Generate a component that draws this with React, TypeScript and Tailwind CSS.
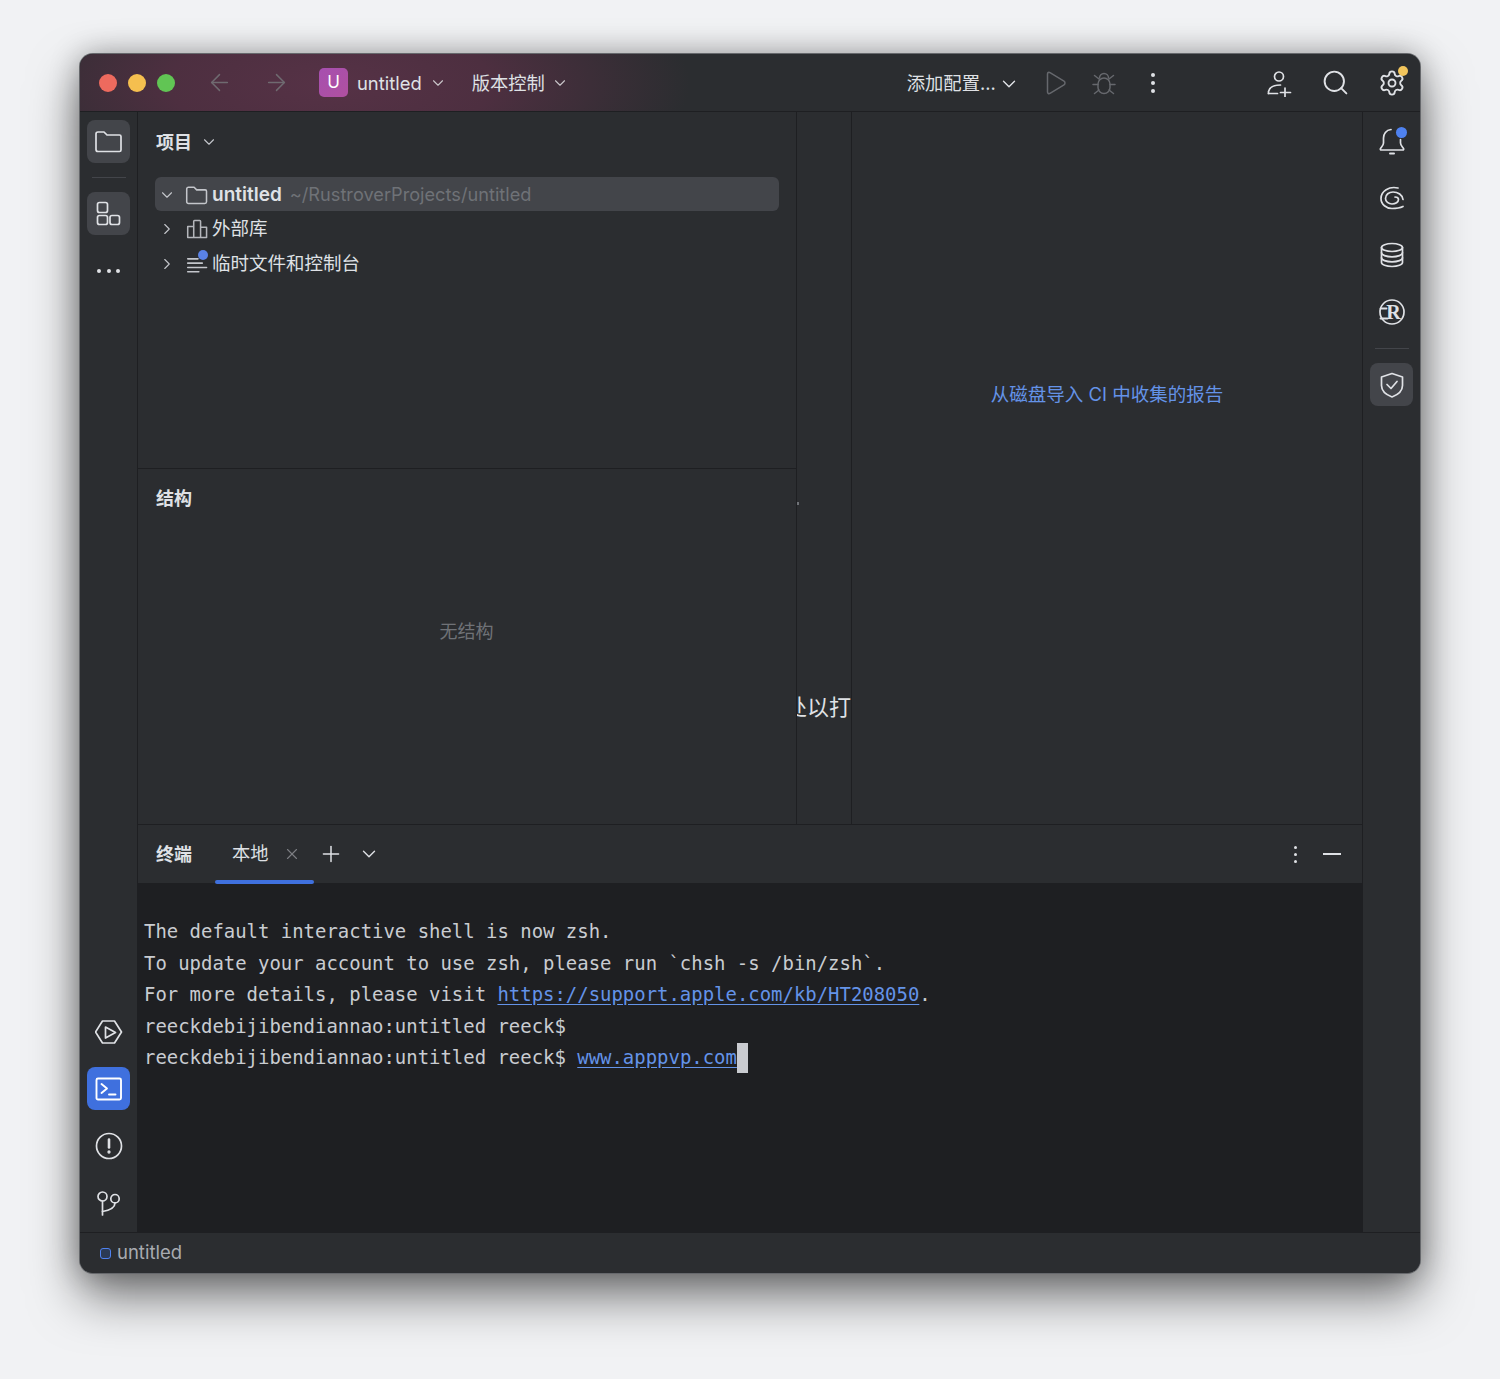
import { ArrowLeft, ArrowRight, ChevronDown, ChevronRight, Plus, Search, Settings, X } from "lucide-react";
import type { ReactNode } from "react";

const UI_FONT = "font-['Inter','Noto_Sans_CJK_SC',sans-serif]";

function Ico({ size = 28, sw = 1.7, className = "", children }: { size?: number; sw?: number; className?: string; children: ReactNode }) {
  return (
    <svg width={size} height={size} viewBox="0 0 28 28" fill="none" stroke="currentColor" strokeWidth={sw} strokeLinecap="round" strokeLinejoin="round" className={className}>
      {children}
    </svg>
  );
}

function RailButton({ active, blue, children }: { active?: boolean; blue?: boolean; children: ReactNode }) {
  return (
    <div className={`flex h-[43px] w-[43px] items-center justify-center rounded-lg ${blue ? "bg-[#3f70de] text-white" : active ? "bg-[#43454a] text-[#dfe1e5]" : "text-[#dfe1e5]"}`}>
      {children}
    </div>
  );
}

function LeftRail() {
  return (
    <div className="flex w-[58px] shrink-0 flex-col items-center border-r border-[#1e1f22] bg-[#2b2d30] pt-[8px] pb-[8px]">
      <RailButton active>
        <Ico>
          <path d="M1 6a2 2 0 0 1 2-2h6l3 3h12.500A1.500 1.500 0 0 1 26 8.500V22a1.500 1.500 0 0 1-1.500 1.500H3a2 2 0 0 1-2-2z" />
        </Ico>
      </RailButton>
      <div className="my-[14px] h-px w-[34px] bg-[#43454a]" />
      <RailButton active>
        <Ico>
          <rect x="2.500" y="2.500" width="10" height="10" rx="2" />
          <rect x="2.500" y="15.500" width="10" height="9" rx="2" />
          <rect x="15" y="15.500" width="9.500" height="9" rx="2" />
        </Ico>
      </RailButton>
      <div className="mt-[34px] flex gap-[5.500px]">
        <span className="h-[4px] w-[4px] rounded-full bg-[#dfe1e5]" />
        <span className="h-[4px] w-[4px] rounded-full bg-[#dfe1e5]" />
        <span className="h-[4px] w-[4px] rounded-full bg-[#dfe1e5]" />
      </div>
      <div className="mt-auto flex flex-col items-center gap-[14px]">
        <RailButton>
          <Ico>
            <path d="M7.500 3h12l7 11-7 11h-12L.5 14z" />
            <path d="M10.500 9l10 5.500-10 5.500z" />
          </Ico>
        </RailButton>
        <RailButton blue>
          <Ico>
            <rect x="1.500" y="3.500" width="24.500" height="21" rx="1.500" strokeWidth="1.900" />
            <path d="M6.500 9l5.500 4.500-5.500 4.500" strokeWidth="1.900" />
            <path d="M14 19.500h6.500" strokeWidth="1.900" />
          </Ico>
        </RailButton>
        <RailButton>
          <Ico>
            <circle cx="14" cy="14" r="12.500" />
            <path d="M14 7.500v8" strokeWidth="2.600" />
            <circle cx="14" cy="20" r="0.700" strokeWidth="1.900" />
          </Ico>
        </RailButton>
        <RailButton>
          <Ico>
            <circle cx="7.500" cy="7.500" r="4.500" />
            <circle cx="20" cy="9.700" r="4.200" />
            <path d="M7.500 12v14" />
            <path d="M20 14c0 4-4 7-12.500 8.500" />
          </Ico>
        </RailButton>
      </div>
    </div>
  );
}

function RightRail() {
  return (
    <div className="flex w-[58px] shrink-0 flex-col items-center border-l border-[#1e1f22] bg-[#2b2d30] pt-[7px] text-[#dfe1e5]">
      <div className="relative flex h-[43px] w-[43px] items-center justify-center">
        <Ico>
          <path d="M13 2.500C8 3 5.500 7 5.500 11v5c0 2-1.500 3.500-3 5.500-.5.700 0 1.500.8 1.500h21.400c.8 0 1.300-.8.8-1.500-1.500-2-3-3.500-3-5.500v-3.500" />
          <path d="M12 26.500h4" strokeWidth="2" />
        </Ico>
        <span className="absolute top-[8px] right-[6px] h-[11px] w-[11px] rounded-full bg-[#4f82f0]" />
      </div>
      <div className="mt-[14px] flex h-[43px] w-[43px] items-center justify-center">
        <Ico>
          <path d="M20 4C11 2 3 7 3 14.500c0 6 5.500 10 11 10 4 0 8-.5 11-2" />
          <path d="M25 15.500C24.500 11 20 8 15 8c-4 0-7.500 2.500-7.500 6.500 0 3 3 5.500 6.500 5.500 3.500 0 6.500-2 6.500-4.500 0-1.500-1.500-2.500-3.500-2.500" />
        </Ico>
      </div>
      <div className="mt-[14px] flex h-[43px] w-[43px] items-center justify-center">
        <Ico>
          <ellipse cx="14" cy="6.500" rx="10.500" ry="4" />
          <path d="M3.500 6.500v15c0 2.200 4.700 4 10.500 4s10.500-1.800 10.500-4v-15" />
          <path d="M3.500 11.800c0 2.200 4.700 4 10.500 4s10.500-1.800 10.500-4" />
          <path d="M3.500 16.800c0 2.200 4.700 4 10.500 4s10.500-1.800 10.500-4" />
        </Ico>
      </div>
      <div className="mt-[14px] flex h-[43px] w-[43px] items-center justify-center">
        <Ico>
          <circle cx="14" cy="14" r="12" />
          <text x="15.500" y="21" textAnchor="middle" fontFamily="Liberation Serif" fontWeight="700" fontSize="20" fill="currentColor" stroke="none">R</text>
          <path d="M2.500 10.500h6M2.500 20.500h7" strokeWidth="1.800" />
        </Ico>
      </div>
      <div className="mt-[15px] mb-[14px] h-px w-[34px] bg-[#43454a]" />
      <RailButton active>
        <Ico>
          <path d="M14 2.500l10.500 3.500v8.500c0 5-4 9-10.500 11.500C7.500 23.500 3.500 19.500 3.500 14.500V6z" />
          <path d="M9 13.500l4 4 6-7" />
        </Ico>
      </RailButton>
    </div>
  );
}

function TitleBar() {
  return (
    <div className="flex h-[58px] shrink-0 items-center border-b border-[#1e1f22] bg-[#2b2d30] bg-[radial-gradient(ellipse_360px_130px_at_250px_30px,#563246_0%,#4d2f40_45%,#2b2d30_100%)] text-[#dfe1e5]">
      <div className="ml-[19px] flex gap-[11px]">
        <span className="h-[18px] w-[18px] rounded-full bg-[#ed6a5e]" />
        <span className="h-[18px] w-[18px] rounded-full bg-[#f5bf4f]" />
        <span className="h-[18px] w-[18px] rounded-full bg-[#61c554]" />
      </div>
      <ArrowLeft size={27} strokeWidth={1.3} className="ml-[31px] text-[#6f6a70]" />
      <ArrowRight size={27} strokeWidth={1.3} className="ml-[30px] text-[#6f6a70]" />
      <div className="ml-[29px] flex h-[29px] w-[29px] items-center justify-center rounded-[5px] bg-gradient-to-br from-[#a64fb0] to-[#b0509f] text-[17px] text-white">U</div>
      <span className="ml-[9px] mt-[2px] text-[18.400px]">untitled</span>
      <ChevronDown size={18} strokeWidth={1.5} className="ml-[7px] text-[#c9c5c9]" />
      <span className="ml-[25px] mt-[2px] text-[18.300px]">版本控制</span>
      <ChevronDown size={18} strokeWidth={1.5} className="ml-[6px] text-[#c9c5c9]" />
      <span className="ml-[338px] mt-[2px] text-[18.300px]">添加配置...</span>
      <ChevronDown size={22} strokeWidth={1.5} className="ml-[2px] mt-[2px] text-[#dfe1e5]" />
      <Ico sw={1.5} className="ml-[21px] text-[#66686d]">
        <path d="M6.500 5c0-1.500 1.300-2 2.500-1.300l14 8.500c1.300.8 1.300 2.800 0 3.600L9 24.300c-1.200.7-2.500.2-2.500-1.300z" />
      </Ico>
      <Ico sw={1.5} className="ml-[21px] text-[#66686d]">
        <path d="M9.500 9a4.500 4.500 0 0 1 9 0" />
        <rect x="8" y="9" width="12" height="15.500" rx="6" />
        <path d="M8 15.500H3M20 15.500h5M9 10L4.500 6.500M19 10l4.500-3.500M9 21l-4.500 3.500M19 21l4.500 3.500" />
      </Ico>
      <div className="ml-[33px] flex flex-col gap-[4px]">
        <span className="h-[4px] w-[4px] rounded-full bg-[#dfe1e5]" />
        <span className="h-[4px] w-[4px] rounded-full bg-[#dfe1e5]" />
        <span className="h-[4px] w-[4px] rounded-full bg-[#dfe1e5]" />
      </div>
      <Ico className="ml-[110px]">
        <circle cx="14" cy="7.500" r="4.500" />
        <path d="M3.500 24.500v-2c1-4 5-6.500 12-6.500" />
        <path d="M3.500 24.500h9M20 19v9M15.500 23.500h10" />
      </Ico>
      <Search size={29} strokeWidth={1.6} className="ml-[28px]" />
      <div className="relative ml-[28px] h-[28px] w-[28px]">
        <Settings size={28} strokeWidth={1.6} />
        <span className="absolute top-[-3px] right-[-2px] h-[10px] w-[10px] rounded-full bg-[#f2c55c]" />
      </div>
    </div>
  );
}

function TreeRow({ selected, children }: { selected?: boolean; children: ReactNode }) {
  return (
    <div className={`flex h-[34px] items-center rounded-md pl-[3px] pt-[2px] ${selected ? "bg-[#43454a]" : ""}`}>{children}</div>
  );
}

function ProjectPanels() {
  return (
    <div className="flex w-[659px] shrink-0 flex-col border-r border-[#1e1f22] text-[#dfe1e5]">
      <div className="h-[357px] shrink-0 border-b border-[#1e1f22] pl-[17px] pr-[17px]">
        <div className="flex h-[60px] items-center pl-px">
          <span className="text-[18px] font-semibold">项目</span>
          <ChevronDown size={18} strokeWidth={1.5} className="ml-[8px] text-[#c4c6cb]" />
        </div>
        <div className="mt-[5px]">
          <TreeRow selected>
            <ChevronDown size={18} strokeWidth={1.5} className="text-[#c4c6cb]" />
            <Ico size={24} sw={1.800} className="ml-[9px] text-[#c4c6cb]">
              <path d="M2 7a2 2 0 0 1 2-2h6.600l3 3h10a1.500 1.500 0 0 1 1.500 1.500V22a2 2 0 0 1-2 2H4a2 2 0 0 1-2-2z" />
            </Ico>
            <span className="ml-[3px] text-[19px] font-semibold">untitled</span>
            <span className="ml-[8px] text-[18.200px] text-[#6f7277]">~/RustroverProjects/untitled</span>
          </TreeRow>
          <TreeRow>
            <ChevronRight size={18} strokeWidth={1.5} className="text-[#c4c6cb]" />
            <Ico size={24} sw={1.800} className="ml-[10px] text-[#b4b6bb]">
              <path d="M2 11h7v13H2zM9 24V5a1 1 0 0 1 1-1h6a1 1 0 0 1 1 1v19zM17 12h7v12h-7z" />
            </Ico>
            <span className="ml-[2px] text-[18.500px]">外部库</span>
          </TreeRow>
          <div className="mt-px">
            <TreeRow>
              <ChevronRight size={18} strokeWidth={1.5} className="text-[#c4c6cb]" />
              <div className="relative ml-[10px] h-[24px] w-[24px]">
                <Ico size={24} sw={1.800} className="text-[#c4c6cb]">
                  <path d="M2 8h12M2 13h17M2 18h22M2 23h13" />
                </Ico>
                <span className="absolute top-[-2px] right-[2px] h-[10px] w-[10px] rounded-full bg-[#5a82e6]" />
              </div>
              <span className="ml-[2px] text-[18.500px]">临时文件和控制台</span>
            </TreeRow>
          </div>
        </div>
      </div>
      <div className="relative flex flex-1 flex-col pl-[18px]">
        <div className="flex h-[58px] items-center text-[18px] font-semibold">结构</div>
        <div className="mt-[91px] pr-[19px] text-center text-[18px] text-[#6f7277]">无结构</div>
        <span className="absolute top-[33px] right-[-3px] h-[3px] w-[2px] bg-[#6f7277]" />
      </div>
    </div>
  );
}

function EditorArea() {
  return (
    <div className="flex min-w-0 flex-1">
      <div className="flex w-[55px] shrink-0 items-end justify-end overflow-hidden border-r border-[#1e1f22] pb-[100px]">
        <span className="whitespace-nowrap text-[22px] text-[#dfe1e5]">此处以打</span>
      </div>
      <div className="flex-1 pt-[269px] text-center text-[18.500px] text-[#6493e8]">从磁盘导入 CI 中收集的报告</div>
    </div>
  );
}

function Terminal() {
  return (
    <div className="flex h-[408px] shrink-0 flex-col border-t border-[#1e1f22]">
      <div className="flex h-[58px] shrink-0 items-center bg-[#2b2d30] pl-[18px] pr-[21px] text-[#dfe1e5]">
        <span className="text-[18px] font-semibold">终端</span>
        <div className="relative ml-[23px] flex h-full w-[99px] items-center pl-[17px]">
          <span className="text-[18.300px]">本地</span>
          <X size={18} strokeWidth={1.5} className="ml-[14px] text-[#7c7e83]" />
          <span className="absolute bottom-[-1px] left-0 h-[4px] w-full rounded-full bg-[#3f70de]" />
        </div>
        <Plus size={26} strokeWidth={1.4} className="ml-[4px]" />
        <ChevronDown size={22} strokeWidth={1.5} className="ml-[14px]" />
        <div className="ml-auto flex flex-col gap-[4px]">
          <span className="h-[3px] w-[3px] rounded-full bg-[#dfe1e5]" />
          <span className="h-[3px] w-[3px] rounded-full bg-[#dfe1e5]" />
          <span className="h-[3px] w-[3px] rounded-full bg-[#dfe1e5]" />
        </div>
        <span className="ml-[26px] h-[2px] w-[18px] bg-[#dfe1e5]" />
      </div>
      <div className="flex-1 bg-[#1e1f22] pt-[33px] pl-[6px] font-['DejaVu_Sans_Mono',monospace] text-[18.950px] leading-[31.500px] text-[#c9ccd1] whitespace-pre">
        <div>The default interactive shell is now zsh.</div>
        <div>To update your account to use zsh, please run `chsh -s /bin/zsh`.</div>
        <div>
          For more details, please visit <span className="text-[#6493e8] underline underline-offset-[3px]">https://support.apple.com/kb/HT208050</span>.
        </div>
        <div>reeckdebijibendiannao:untitled reeck$</div>
        <div className="flex items-center">
          reeckdebijibendiannao:untitled reeck$ <span className="text-[#6493e8] underline underline-offset-[3px]">www.apppvp.com</span>
          <span className="h-[30px] w-[11px] bg-[#c9cbd0]" />
        </div>
      </div>
    </div>
  );
}

export default function App() {
  return (
    <div className={`min-h-[1379px] bg-[#f1f2f4] px-[80px] pt-[54px] ${UI_FONT}`}>
      <div className="flex h-[1219px] w-[1340px] flex-col overflow-hidden rounded-[13px] bg-[#2b2d30] shadow-[0_0_0_1px_#66686c,0_0_30px_rgba(0,0,0,0.3),0_24px_50px_rgba(0,0,0,0.5)]">
        <TitleBar />
        <div className="flex min-h-0 flex-1">
          <LeftRail />
          <div className="flex min-w-0 flex-1 flex-col">
            <div className="flex min-h-0 flex-1">
              <ProjectPanels />
              <EditorArea />
            </div>
            <Terminal />
          </div>
          <RightRail />
        </div>
        <div className="flex h-[41px] shrink-0 items-center border-t border-[#1e1f22] bg-[#2b2d30] pl-[20px] text-[18.500px] text-[#a8abb0]">
          <span className="h-[11px] w-[11px] rounded-[3px] border-[1.5px] border-[#4f82f0] bg-[#2b3a55]" />
          <span className="ml-[6px]">untitled</span>
        </div>
      </div>
    </div>
  );
}
